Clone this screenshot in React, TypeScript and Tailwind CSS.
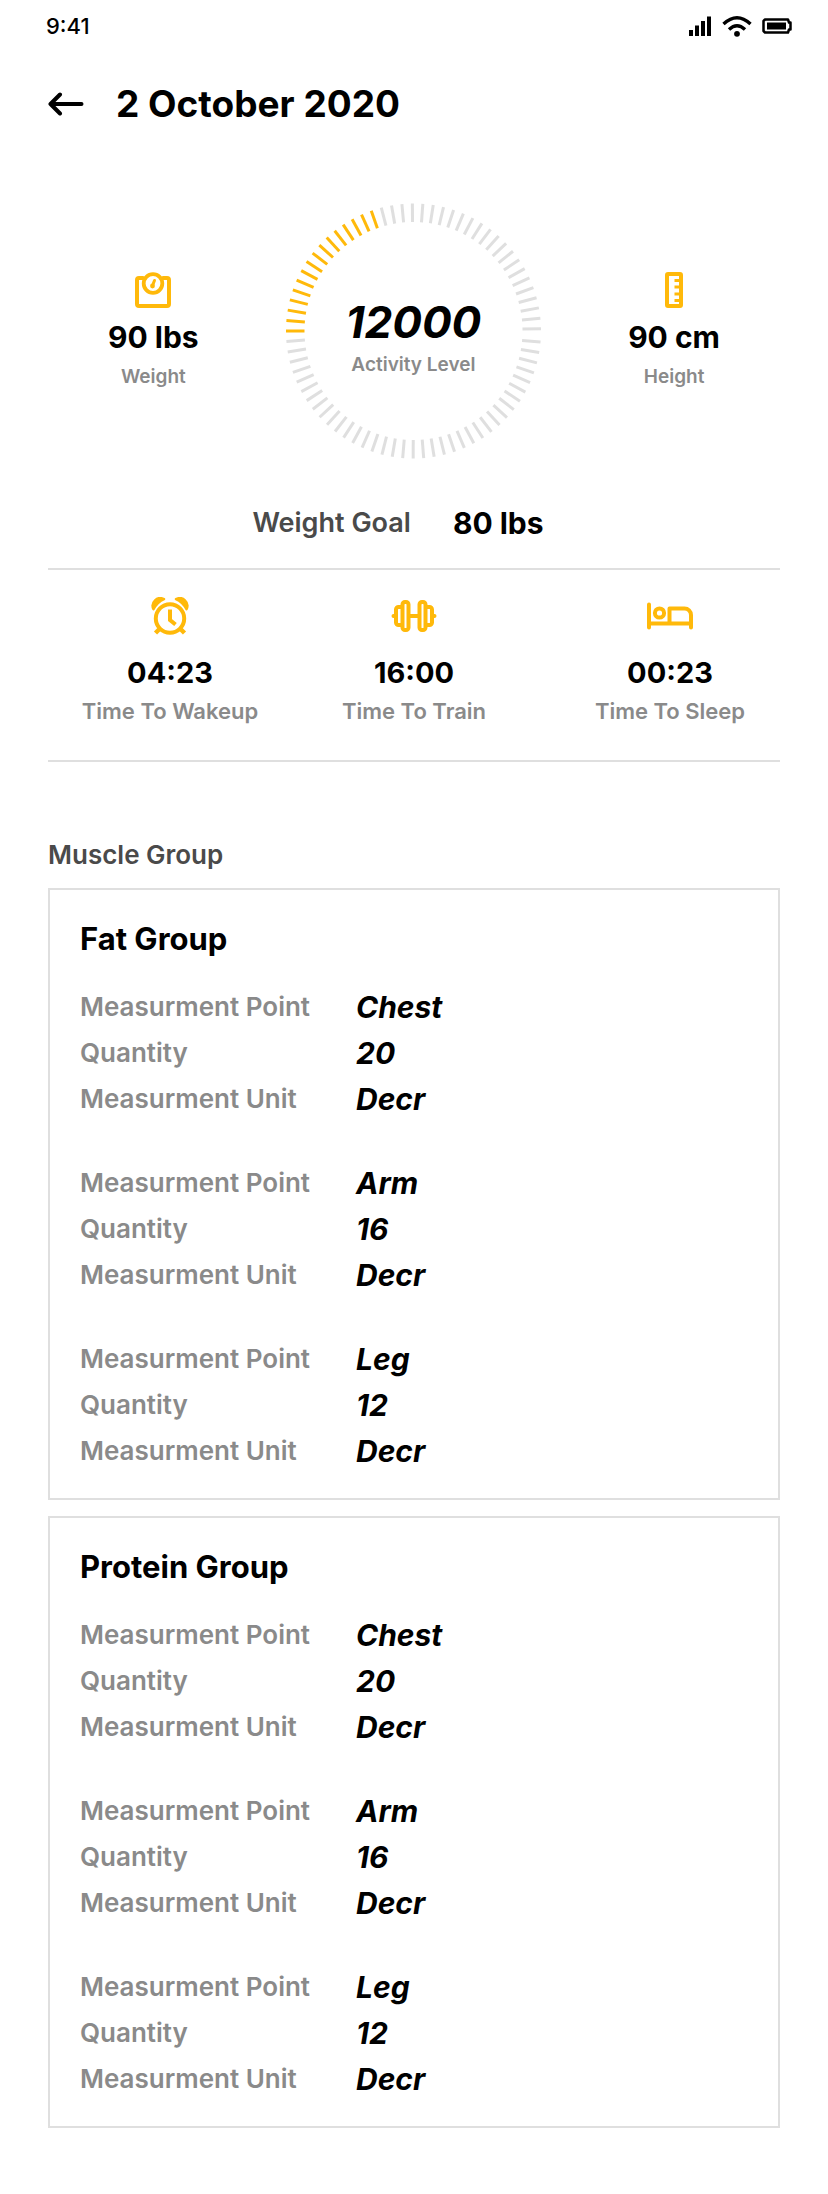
import React from "react";

const rad = (d: number) => (d * Math.PI) / 180;

const ticks: { angle: number; active: boolean }[] = [
  ...Array.from({ length: 39 }, (_, i) => ({ angle: 180 + i * 4.71, active: i < 16 })),
  ...Array.from({ length: 37 }, (_, i) => ({ angle: 5 + i * 4.73, active: false })),
];

function ActivityDial() {
  return (
    <svg viewBox="0 0 256 256" className="col-start-1 row-start-1 size-64" aria-hidden="true">
      {ticks.map(({ angle, active }) => {
        const c = Math.cos(rad(angle));
        const s = Math.sin(rad(angle));
        return (
          <line
            key={angle}
            x1={128.5 + c * 109}
            y1={128 + s * 109}
            x2={128.5 + c * 127.5}
            y2={128 + s * 127.5}
            stroke={active ? "#ffb90a" : "#dfdfdf"}
            strokeWidth="3"
          />
        );
      })}
    </svg>
  );
}

function ScaleIcon() {
  return (
    <svg viewBox="0 0 38 38" className="h-[38px] w-[38px]" fill="none" stroke="#ffb90a" strokeWidth="4" strokeLinecap="round" aria-hidden="true">
      <path d="M9 7H5a2 2 0 0 0-2 2v24a2 2 0 0 0 2 2h28a2 2 0 0 0 2-2V9a2 2 0 0 0-2-2h-4" />
      <circle cx="19" cy="12.500" r="9.300" strokeWidth="3.800" />
      <path d="M18.500 14.500L20.500 9.500" strokeWidth="3" />
      <circle cx="18.500" cy="15" r="2.400" fill="#ffb90a" stroke="none" />
    </svg>
  );
}

function RulerIcon() {
  return (
    <svg viewBox="0 0 20 38" className="h-[38px] w-5" fill="none" stroke="#ffb90a" aria-hidden="true">
      <rect x="3" y="3" width="14" height="32" rx="1" strokeWidth="4" />
      <path d="M10.500 9.500H16M10.500 16H16M10.500 23H16M10.500 29.500H16" strokeWidth="2.800" />
    </svg>
  );
}

function AlarmIcon() {
  return (
    <svg viewBox="0 0 38 38" className="size-[38px]" fill="none" stroke="#ffb90a" aria-hidden="true">
      <circle cx="19" cy="21.500" r="14.200" strokeWidth="4" />
      <path d="M19 12.500V23L24.500 27.500" strokeWidth="4" />
      <path d="M8.500 32L4.500 36M29.500 32L33.500 36" strokeWidth="4.500" />
      <path d="M2.500 12.200A7.600 7.600 0 0 1 13 2.200Q6.500 5 2.500 12.200ZM35.500 12.200A7.600 7.600 0 0 0 25 2.200Q31.500 5 35.500 12.200Z" fill="#ffb90a" strokeWidth="2.500" strokeLinejoin="round" />
    </svg>
  );
}

function DumbbellIcon() {
  return (
    <svg viewBox="0 0 46 38" className="h-[38px] w-[46px]" fill="none" stroke="#ffb90a" strokeWidth="4" strokeLinecap="round" aria-hidden="true">
      <rect x="11.500" y="5" width="6" height="28" rx="2.500" />
      <rect x="28.500" y="5" width="6" height="28" rx="2.500" />
      <path d="M11 10H7.500A2.500 2.500 0 0 0 5 12.500v13A2.500 2.500 0 0 0 7.500 28H11M35 10h3.500a2.500 2.500 0 0 1 2.500 2.500v13A2.500 2.500 0 0 1 38.500 28H35M18 19h10M2.500 19H5M41 19h2.500" />
    </svg>
  );
}

function BedIcon() {
  return (
    <svg viewBox="0 0 46 38" className="h-[38px] w-[46px]" fill="none" stroke="#ffb90a" strokeWidth="4" aria-hidden="true">
      <path d="M2 7.500V30.500M44 30.500V18a6.500 6.500 0 0 0-6.500-6.500H22.500V26M2 26.500H44" strokeLinecap="round" strokeLinejoin="round" />
      <circle cx="12.500" cy="16" r="4.600" />
    </svg>
  );
}

function StatusBar() {
  return (
    <div className="flex h-[52px] items-center justify-between pr-9 pl-[46px]">
      <span className="text-[22px] leading-7 font-medium">9:41</span>
      <div className="flex items-center gap-[10px]">
        <svg viewBox="0 0 24 20" className="h-5 w-6" aria-hidden="true">
          <path d="M1 14h4v6H1zM7 9.500h4V20H7zM13 5h4v15h-4zM19 .5h4V20h-4z" />
        </svg>
        <svg viewBox="0 0 30 22" className="h-[22px] w-[30px]" fill="none" stroke="#000" strokeWidth="3.400" aria-hidden="true">
          <path d="M1.500 9Q15-3.500 28.500 9M7 14.500Q15 7 23 14.500" />
          <circle cx="15" cy="18.800" r="2.900" fill="#000" stroke="none" />
        </svg>
        <svg viewBox="0 0 30 16" className="h-4 w-[30px]" aria-hidden="true">
          <path d="M3 1.500h23l1 3h1.500v7H27l-1 3H3L1.500 13V3z" fill="none" stroke="#000" strokeWidth="2.500" strokeLinejoin="round" />
          <path d="M5 4.500h19v7H5z" />
        </svg>
      </div>
    </div>
  );
}

function Stat({ icon, value, label }: { icon: React.ReactNode; value: string; label: string }) {
  return (
    <div className="flex flex-col items-center pt-0.5">
      {icon}
      <p className="mt-2 text-[30px] leading-10 font-bold">{value}</p>
      <p className="mt-1 text-[19px] leading-8 font-semibold text-[#8a8a8a]">{label}</p>
    </div>
  );
}

const times = [
  { icon: <AlarmIcon />, value: "04:23", label: "Time To Wakeup" },
  { icon: <DumbbellIcon />, value: "16:00", label: "Time To Train" },
  { icon: <BedIcon />, value: "00:23", label: "Time To Sleep" },
];

const measurements = [
  { point: "Chest", quantity: "20", unit: "Decr" },
  { point: "Arm", quantity: "16", unit: "Decr" },
  { point: "Leg", quantity: "12", unit: "Decr" },
];

function Row({ label, value }: { label: string; value: string }) {
  return (
    <div className="flex items-center leading-[46px]">
      <dt className="w-[276px] shrink-0 text-[26px] font-semibold text-[#8a8a8a]">{label}</dt>
      <dd className="text-[30px] font-bold italic">{value}</dd>
    </div>
  );
}

function GroupCard({ title }: { title: string }) {
  return (
    <section className="border-2 border-[#dfdfdf] px-[30px] pt-[29px] pb-6">
      <h3 className="text-[31px] leading-10 font-bold">{title}</h3>
      <div className="mt-[25px] flex flex-col gap-[38px]">
        {measurements.map((m) => (
          <dl key={m.point}>
            <Row label="Measurment Point" value={m.point} />
            <Row label="Quantity" value={m.quantity} />
            <Row label="Measurment Unit" value={m.unit} />
          </dl>
        ))}
      </div>
    </section>
  );
}

export default function App() {
  return (
    <div className="bg-white font-['Inter',sans-serif] text-black">
      <StatusBar />
      <main className="px-12 pb-[66px]">
        <header className="flex items-center gap-8 pt-7">
          <button type="button" aria-label="Back">
            <svg viewBox="0 0 36 24" className="h-6 w-9" fill="none" stroke="#000" strokeWidth="4" strokeLinecap="round" strokeLinejoin="round" aria-hidden="true">
              <path d="M2.500 12H33.500M12 2.500L2.500 12L12 21.500" />
            </svg>
          </button>
          <h1 className="text-[37px] leading-[48px] font-bold">2 October 2020</h1>
        </header>

        <section className="mt-[75px] flex items-center justify-between px-[60px]">
          <Stat icon={<ScaleIcon />} value="90 lbs" label="Weight" />
          <div className="grid place-items-center">
            <ActivityDial />
            <div className="col-start-1 row-start-1 flex flex-col items-center pt-[18px]">
              <p className="text-[44px] leading-[50px] font-bold italic">12000</p>
              <p className="text-[19px] leading-9 font-semibold text-[#8a8a8a]">Activity Level</p>
            </div>
          </div>
          <Stat icon={<RulerIcon />} value="90 cm" label="Height" />
        </section>

        <div className="mt-11 flex items-center justify-center gap-[42px] pr-8 leading-10">
          <span className="text-[27px] font-semibold text-[#4a4a4a]">Weight Goal</span>
          <span className="text-[30px] font-bold">80 lbs</span>
        </div>

        <section className="mt-[25px] grid grid-cols-3 border-y-2 border-[#dfdfdf] pt-[27px] pb-[31px]">
          {times.map((t) => (
            <div key={t.label} className="flex flex-col items-center last:pl-6">
              {t.icon}
              <p className="mt-[18px] text-[29px] leading-10 font-bold">{t.value}</p>
              <p className="text-[22px] leading-9 font-semibold text-[#8a8a8a]">{t.label}</p>
            </div>
          ))}
        </section>

        <h2 className="mt-[73px] text-[26px] leading-10 font-semibold text-[#4a4a4a]">Muscle Group</h2>
        <div className="mt-[13px] flex flex-col gap-4">
          <GroupCard title="Fat Group" />
          <GroupCard title="Protein Group" />
        </div>
      </main>
    </div>
  );
}
